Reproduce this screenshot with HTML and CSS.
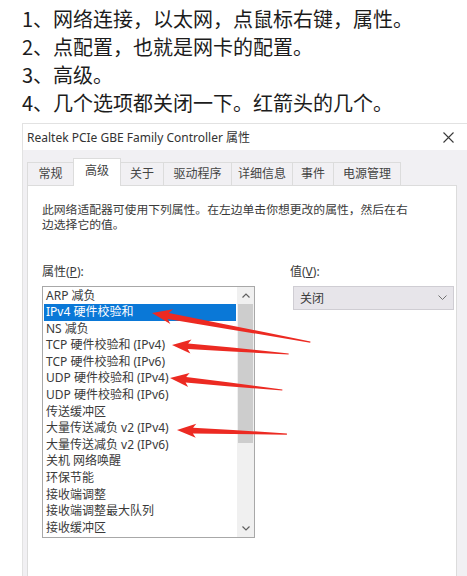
FILE: index.html
```html
<!DOCTYPE html>
<html lang="zh-CN">
<head>
<meta charset="utf-8">
<title>网卡属性设置</title>
<link rel="stylesheet" href="styles.css">
</head>
<body>
<div class="page">
  <div class="steps">
    <p>1、网络连接，以太网，点鼠标右键，属性。</p>
    <p>2、点配置，也就是网卡的配置。</p>
    <p>3、高级。</p>
    <p>4、几个选项都关闭一下。红箭头的几个。</p>
  </div>

  <div class="dialog">
    <div class="titlebar">
      <span class="title">Realtek PCIe GBE Family Controller 属性</span>
      <svg class="close" width="11" height="11" viewBox="0 0 11 11"><path d="M0.5 0.5 L10.5 10.5 M10.5 0.5 L0.5 10.5" stroke="#3a3a3a" stroke-width="1.1" fill="none"/></svg>
    </div>
    <div class="dbody">
      <div class="tabs">
        <div class="tab t1">常规</div>
        <div class="tab t2 active">高级</div>
        <div class="tab t3">关于</div>
        <div class="tab t4">驱动程序</div>
        <div class="tab t5">详细信息</div>
        <div class="tab t6">事件</div>
        <div class="tab t7">电源管理</div>
      </div>
      <div class="panel">
        <div class="desc">
          <div class="dline">此网络适配器可使用下列属性。在左边单击你想更改的属性，然后在右</div>
          <div class="dline">边选择它的值。</div>
        </div>
        <div class="props">
          <div class="col-left">
            <div class="label">属性(<u>P</u>):</div>
            <div class="listbox">
              <ul class="items">
                <li>ARP 减负</li>
                <li class="sel">IPv4 硬件校验和</li>
                <li>NS 减负</li>
                <li>TCP 硬件校验和 (IPv4)</li>
                <li>TCP 硬件校验和 (IPv6)</li>
                <li>UDP 硬件校验和 (IPv4)</li>
                <li>UDP 硬件校验和 (IPv6)</li>
                <li>传送缓冲区</li>
                <li>大量传送减负 v2 (IPv4)</li>
                <li>大量传送减负 v2 (IPv6)</li>
                <li>关机 网络唤醒</li>
                <li>环保节能</li>
                <li>接收端调整</li>
                <li>接收端调整最大队列</li>
                <li>接收缓冲区</li>
              </ul>
              <div class="scrollbar">
                <div class="sbtn"><svg width="8" height="5" viewBox="0 0 8 5"><path d="M0.5 4.5 L4 1 L7.5 4.5" stroke="#606060" stroke-width="1.2" fill="none"/></svg></div>
                <div class="thumb"></div>
                <div class="track"></div>
                <div class="sbtn"><svg width="8" height="5" viewBox="0 0 8 5"><path d="M0.5 0.5 L4 4 L7.5 0.5" stroke="#606060" stroke-width="1.2" fill="none"/></svg></div>
              </div>
            </div>
          </div>
          <div class="col-right">
            <div class="label">值(<u>V</u>):</div>
            <div class="combo">
              <span>关闭</span>
              <svg width="9" height="5" viewBox="0 0 9 5"><path d="M0.5 0.5 L4.5 4.5 L8.5 0.5" stroke="#707070" stroke-width="1" fill="none"/></svg>
            </div>
          </div>
        </div>
      </div>
    </div>
  </div>

  <svg class="arrows" width="467" height="576" viewBox="0 0 467 576">
    <g fill="#ec2a22">
      <polygon transform="translate(152 313) rotate(10.4)" points="0,0 20,-7.5 16.5,-3 80,-2 161,-0.6 161,0.6 80,2 16.5,3 20,7.5"/>
      <polygon transform="translate(172 345) rotate(4.4)" points="0,0 19,-7 16,-2.8 60,-2 117,-0.6 117,0.6 60,2 16,2.8 19,7"/>
      <polygon transform="translate(170 378) rotate(6.1)" points="0,0 19,-7 16,-2.8 58,-2 113,-0.6 113,0.6 58,2 16,2.8 19,7"/>
      <polygon transform="translate(177 430) rotate(2.1)" points="0,0 19,-7 16,-2.8 56,-2 110,-0.6 110,0.6 56,2 16,2.8 19,7"/>
    </g>
  </svg>
</div>
</body>
</html>
```

FILE: styles.css
```css
html, body {
  margin: 0;
  padding: 0;
  background: #ffffff;
  overflow: hidden;
}

.page {
  position: relative;
  width: 467px;
  height: 576px;
  overflow: hidden;
}

.steps {
  padding: 5px 0 0 22px;
  font-family: "Noto Sans CJK SC", "Noto Sans", sans-serif;
  font-size: 20px;
  color: #1c1c1c;
}

.steps p {
  margin: 0;
  line-height: 28px;
  height: 28px;
  white-space: nowrap;
}

.dialog {
  margin: 6px 0 0 22px;
  width: 460px;
  border-top: 1px solid #e2e2e2;
  border-left: 1px solid #e2e2e2;
  font-family: "Noto Sans", "Noto Sans CJK SC", sans-serif;
  font-size: 12px;
  color: #3a3a3a;
}

.titlebar {
  height: 26px;
  background: #ffffff;
  display: flex;
  align-items: center;
  justify-content: space-between;
  padding: 0 14px 0 4px;
  width: 427px;
}

.title {
  font-size: 12px;
  color: #333333;
  white-space: nowrap;
}

.close {
  display: block;
}

.dbody {
  background: #f1f0f3;
  padding: 0 0 0 4px;
  height: 430px;
}

.tabs {
  height: 35px;
  display: flex;
  align-items: flex-end;
}

.tab {
  height: 22px;
  line-height: 22px;
  text-align: center;
  background: #f1f0f3;
  border: 1px solid #dcdcdc;
  border-bottom: none;
  margin-left: -1px;
  white-space: nowrap;
  color: #444444;
}

.tab.t1 { width: 45px; margin-left: 0; }
.tab.t2 { width: 46px; }
.tab.t3 { width: 42px; }
.tab.t4 { width: 67px; }
.tab.t5 { width: 60px; }
.tab.t6 { width: 40px; }
.tab.t7 { width: 66px; }

.tab.active {
  background: #ffffff;
  height: 27px;
  line-height: 24px;
  margin-bottom: -1px;
  position: relative;
  z-index: 1;
}

.panel {
  width: 400px;
  height: 400px;
  background: #ffffff;
  border: 1px solid #dcdcdc;
  padding: 16px 14px 0 14px;
}

.desc {
  display: flex;
  flex-direction: column;
}

.dline {
  height: 15px;
  line-height: 15px;
  white-space: nowrap;
  font-size: 11.8px;
}

.props {
  margin-top: 32px;
  display: flex;
  gap: 35px;
}

.col-left {
  width: 213px;
}

.col-right {
  width: 162px;
}

.label {
  line-height: 15px;
  height: 15px;
  margin-bottom: 6.5px;
}

.label u {
  text-decoration: underline;
}

.listbox {
  width: 211px;
  height: 250px;
  border: 1px solid #a8a8a8;
  display: flex;
  background: #ffffff;
}

.items {
  list-style: none;
  margin: 0;
  padding: 1px 1px 0 1px;
  flex: 1;
}

.items li {
  height: 16.6px;
  line-height: 16.6px;
  padding-left: 2px;
  white-space: nowrap;
  color: #3a3a3a;
}

.items li.sel {
  background: #0a78d7;
  color: #ffffff;
}

.scrollbar {
  width: 17px;
  display: flex;
  flex-direction: column;
  background: #f0f0f0;
}

.sbtn {
  height: 17px;
  display: flex;
  align-items: center;
  justify-content: center;
  background: #f0f0f0;
}

.thumb {
  height: 139px;
  margin: 0 1px;
  background: #cdcdcd;
}

.track {
  flex: 1;
  background: #f0f0f0;
}

.combo {
  margin-left: 3px;
  width: 147px;
  height: 22px;
  border: 1px solid #cfcdd3;
  background: #e7e5ea;
  display: flex;
  align-items: center;
  justify-content: space-between;
  padding: 0 6px 0 6px;
}

.arrows {
  position: absolute;
  left: 0;
  top: 0;
  pointer-events: none;
}
```
